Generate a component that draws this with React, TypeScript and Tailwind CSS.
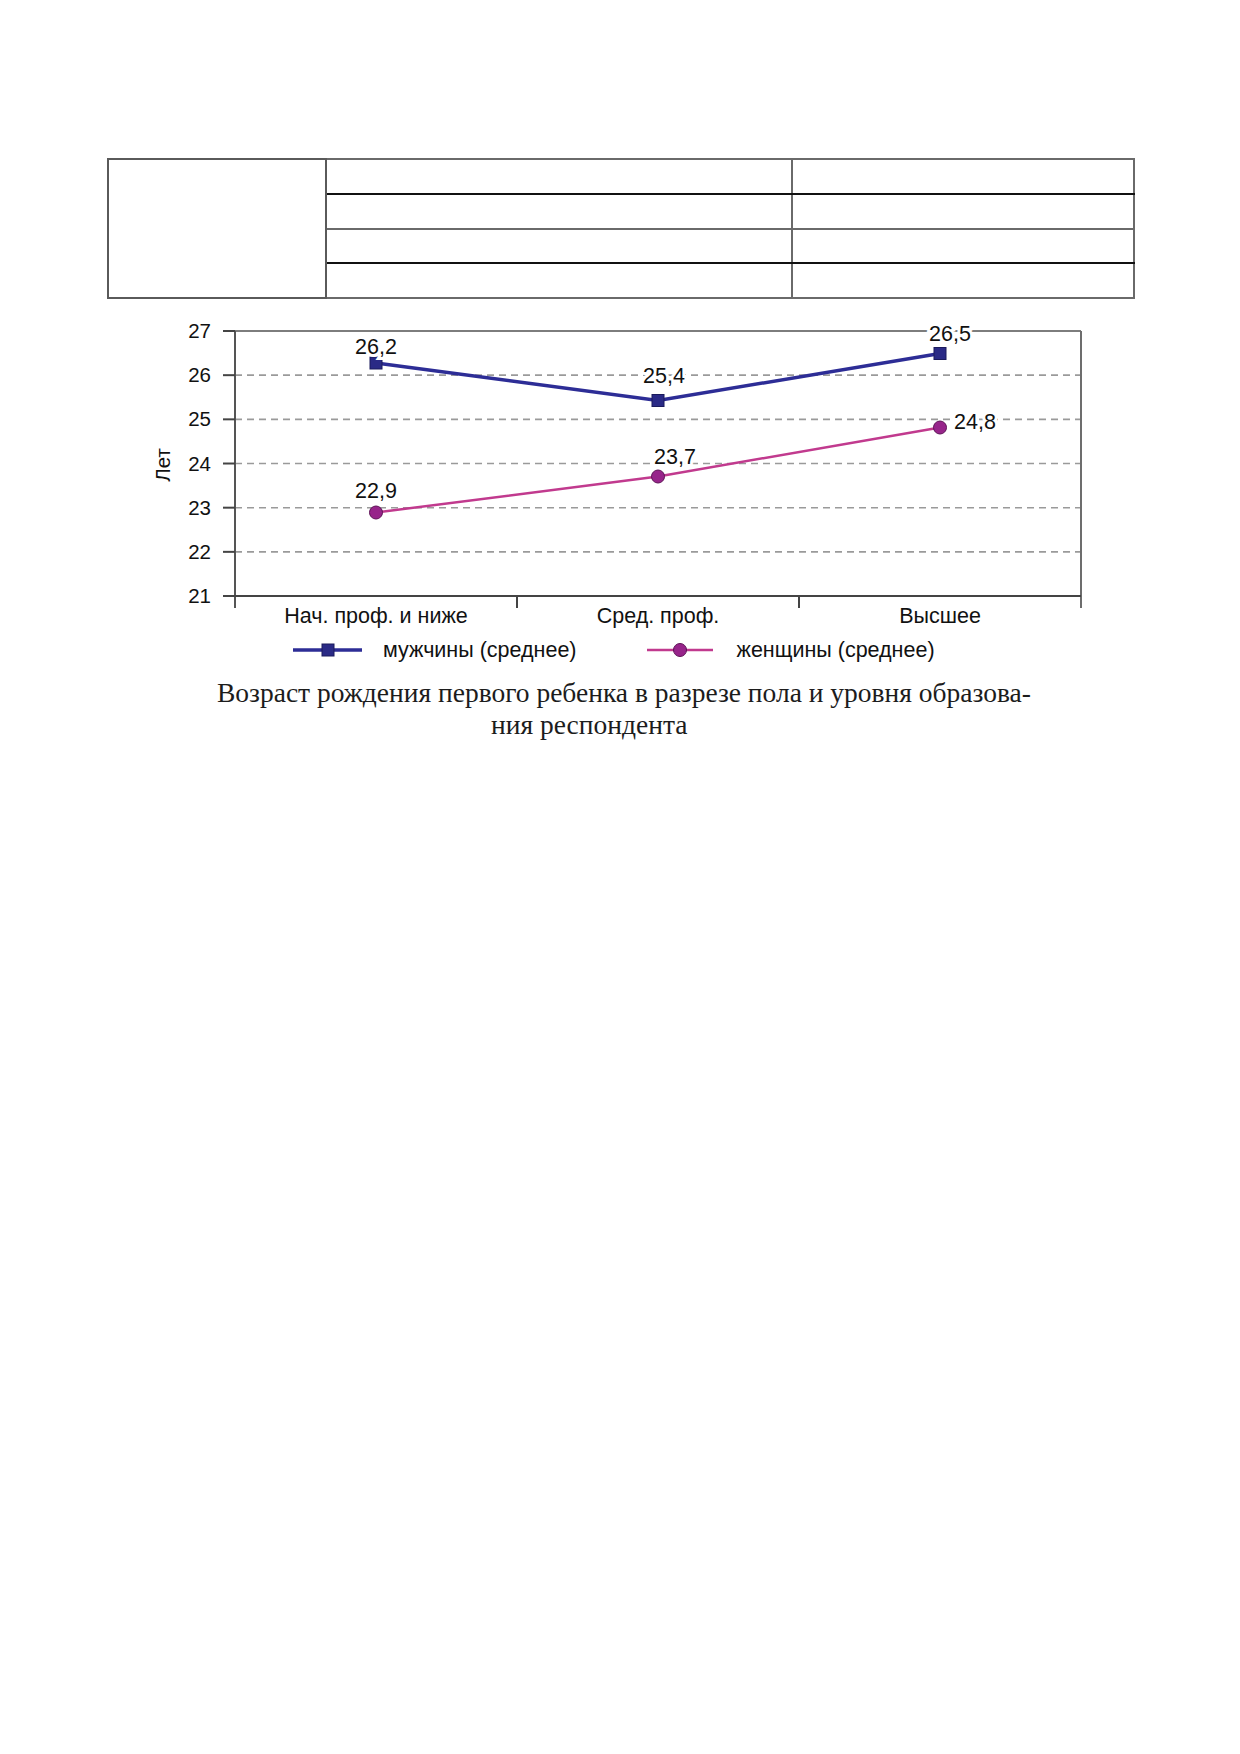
const Y0 = 330;
const STEP = 44.17;
const yOf = (v: number) => Y0 + (27 - v) * STEP;
const XS = [376, 658, 940];

// plotted positions, read off the chart scale
const menY = [362, 399.5, 352.5];
const womenY = [511.5, 475.5, 426.5];

const sans = { fontFamily: '"Liberation Sans", Arial, sans-serif' };

function Chart() {
  const grid = [26, 25, 24, 23, 22];
  const ticks = [27, 26, 25, 24, 23, 22, 21];
  const labels = [
    { t: "26,2", x: 376, y: 353, a: "middle" },
    { t: "25,4", x: 664, y: 382, a: "middle" },
    { t: "26,5", x: 950, y: 340, a: "middle" },
    { t: "22,9", x: 376, y: 497, a: "middle" },
    { t: "23,7", x: 675, y: 463, a: "middle" },
    { t: "24,8", x: 954, y: 428, a: "start" },
  ] as const;

  return (
    <svg width={970} height={330} viewBox="130 300 970 330" className="block ml-[130px] mt-[2px]" style={sans}>
      {grid.map((g) => (
        <line key={g} x1={235} x2={1081} y1={yOf(g)} y2={yOf(g)} stroke="#9a9a9a" strokeWidth={1.6} strokeDasharray="7 5" />
      ))}
      {/* frame */}
      <line x1={235} x2={1081} y1={330} y2={330} stroke="#7d7d7d" strokeWidth={2} />
      <line x1={1081} x2={1081} y1={330} y2={607} stroke="#6d6d6d" strokeWidth={2} />
      <line x1={235} x2={235} y1={330} y2={607} stroke="#555" strokeWidth={2} />
      <line x1={223} x2={1081} y1={595} y2={595} stroke="#444" strokeWidth={2} />
      {ticks.map((t) => (
        <line key={t} x1={223} x2={235} y1={yOf(t)} y2={yOf(t)} stroke="#444" strokeWidth={2} />
      ))}
      {[517, 799].map((x) => (
        <line key={x} x1={x} x2={x} y1={595} y2={607} stroke="#444" strokeWidth={2} />
      ))}
      {ticks.map((t) => (
        <text key={t} x={211} y={yOf(t) + 7} fontSize={20.5} textAnchor="end" fill="#111">
          {t}
        </text>
      ))}
      <text x={170} y={464} fontSize={20.5} textAnchor="middle" fill="#111" transform="rotate(-90 170 464)">
        Лет
      </text>

      <polyline
        points={XS.map((x, i) => `${x},${menY[i]}`).join(" ")}
        fill="none"
        stroke="#2d2d96"
        strokeWidth={3.5}
      />
      <polyline
        points={XS.map((x, i) => `${x},${womenY[i]}`).join(" ")}
        fill="none"
        stroke="#c13a8e"
        strokeWidth={2.5}
      />
      {XS.map((x, i) => (
        <rect key={x} x={x - 6} y={menY[i] - 6} width={12} height={12} fill="#2a2a86" stroke="#1a1a5c" strokeWidth={1} />
      ))}
      {XS.map((x, i) => (
        <circle key={x} cx={x} cy={womenY[i]} r={6.5} fill="#97248a" stroke="#5e1256" strokeWidth={1} />
      ))}

      {labels.map((l) => (
        <text
          key={l.t}
          x={l.x}
          y={l.y}
          fontSize={21.5}
          textAnchor={l.a}
          fill="#111"
          stroke="#fff"
          strokeWidth={6}
          paintOrder="stroke"
        >
          {l.t}
        </text>
      ))}

      <text x={376} y={622} fontSize={21.5} textAnchor="middle" fill="#111">Нач. проф. и ниже</text>
      <text x={658} y={622} fontSize={21.5} textAnchor="middle" fill="#111">Сред. проф.</text>
      <text x={940} y={622} fontSize={21.5} textAnchor="middle" fill="#111">Высшее</text>
    </svg>
  );
}

function LegendItem({ kind, label }: { kind: "square" | "circle"; label: string }) {
  return (
    <div className="flex items-center gap-[21px]">
      <svg width={69} height={16} viewBox="0 0 69 16" className="block">
        {kind === "square" ? (
          <>
            <line x1={0} x2={69} y1={8} y2={8} stroke="#2d2d96" strokeWidth={3.5} />
            <rect x={29} y={2} width={12} height={12} fill="#2a2a86" stroke="#1a1a5c" strokeWidth={1} />
          </>
        ) : (
          <>
            <line x1={0} x2={66} y1={8} y2={8} stroke="#c13a8e" strokeWidth={2.5} />
            <circle cx={33} cy={8} r={6.5} fill="#97248a" stroke="#5e1256" strokeWidth={1} />
          </>
        )}
      </svg>
      <span className="text-[21.5px] leading-6 text-[#111]">{label}</span>
    </div>
  );
}

export default function App() {
  return (
    <div className="w-[1240px] h-[1754px] bg-white pt-[158px]">
      <table className="ml-[107px] border-collapse">
        <tbody>
          <tr className="h-[35px]">
            <td rowSpan={4} className="w-[218px] border-2 border-[#5a5a5a]"></td>
            <td className="w-[466px] border-2 border-[#6a6a6a] border-b-[#111]"></td>
            <td className="w-[342px] border-2 border-[#6a6a6a] border-b-[#111]"></td>
          </tr>
          <tr className="h-[35px]">
            <td className="border-2 border-[#6a6a6a] border-t-[#111]"></td>
            <td className="border-2 border-[#6a6a6a] border-t-[#111]"></td>
          </tr>
          <tr className="h-[34px]">
            <td className="border-2 border-[#6a6a6a] border-b-[#111]"></td>
            <td className="border-2 border-[#6a6a6a] border-b-[#111]"></td>
          </tr>
          <tr className="h-[35px]">
            <td className="border-2 border-[#6a6a6a] border-t-[#111]"></td>
            <td className="border-2 border-[#6a6a6a] border-t-[#111]"></td>
          </tr>
        </tbody>
      </table>

      <Chart />

      <div className="flex mt-[7px] pl-[293px] gap-[70px]" style={sans}>
        <LegendItem kind="square" label="мужчины (среднее)" />
        <LegendItem kind="circle" label="женщины (среднее)" />
      </div>

      <div className="mt-[15px] text-[27.5px] leading-[32px] text-[#1c1c1c]" style={{ fontFamily: '"Liberation Serif", "Times New Roman", serif' }}>
        <div className="pl-[217px]">Возраст рождения первого ребенка в разрезе пола и уровня образова-</div>
        <div className="pl-[491px]">ния респондента</div>
      </div>
    </div>
  );
}
